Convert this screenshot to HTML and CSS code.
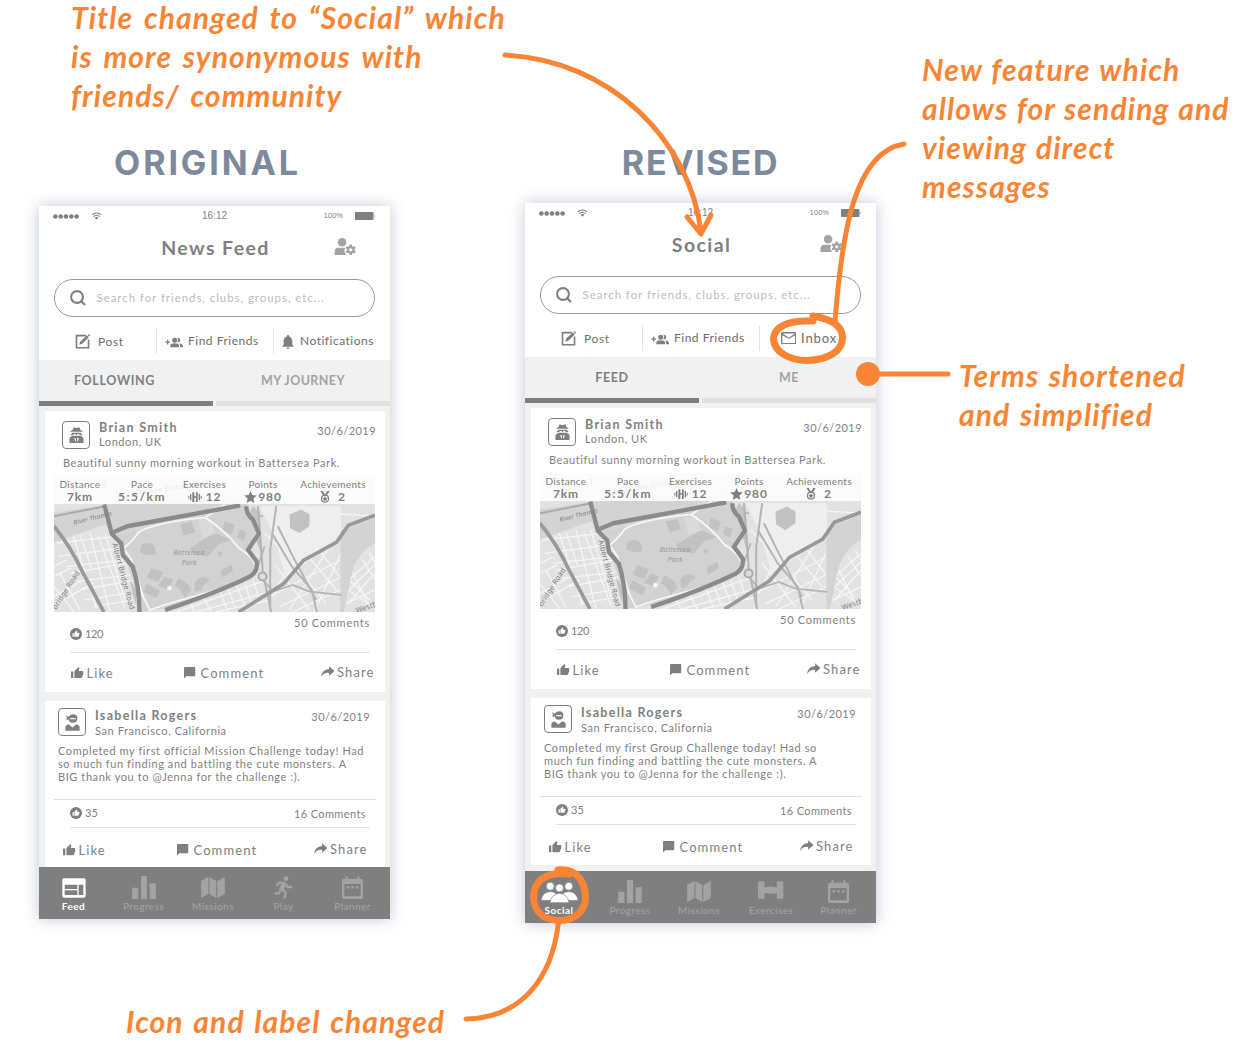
FILE: index.html
```html
<!DOCTYPE html>
<html lang="en">
<head>
<meta charset="utf-8">
<title>News feed: original and revised</title>
<link rel="stylesheet" href="styles.css">
</head>
<body>
<svg class="sprite" aria-hidden="true">
  <symbol id="i-signal" viewBox="0 0 26 5"><circle cx="2.400" cy="2.500" r="2.300"/><circle cx="7.700" cy="2.500" r="2.300"/><circle cx="13" cy="2.500" r="2.300"/><circle cx="18.300" cy="2.500" r="2.300"/><circle cx="23.600" cy="2.500" r="2.300"/></symbol>
  <symbol id="i-wifi" viewBox="0 0 24 18"><g fill="none" stroke="currentColor" stroke-width="2.400"><path d="M1.500 6.500C7.500.8 16.500.8 22.500 6.500"/><path d="M5 10.500c4-3.800 10-3.800 14 0"/></g><path d="M7.800 13c2.600-2 5.800-2 8.400 0L12 17.500z" fill="currentColor"/></symbol>
  <symbol id="i-battery" viewBox="0 0 20 8"><rect width="18.500" height="8" rx="1"/><path d="M19 2.500q1.200 1.500 0 3z"/></symbol>
  <symbol id="i-usercog" viewBox="0 0 66 52"><circle cx="24" cy="13" r="13"/><path d="M1 52V43Q1 30 14 30h20q-4 6-2 13 1 5 5 9z"/><path fill-rule="evenodd" d="M47 20h7l1 5 3 2 5-2 3 6-4 3v4l4 3-3 6-5-2-3 2-1 5h-7l-1-5-3-2-5 2-3-6 4-3v-4l-4-3 3-6 5 2 3-2zM50.500 31a5 5 0 1 0 0 10 5 5 0 1 0 0-10z"/></symbol>
  <symbol id="i-search" viewBox="0 0 16 16"><g fill="none" stroke="currentColor" stroke-width="2.100"><circle cx="7" cy="7" r="5.900"/><path d="M11.200 11.200 15 15"/></g></symbol>
  <symbol id="i-edit" viewBox="0 0 48 46"><path d="M33 5H4v37h37V17" fill="none" stroke="currentColor" stroke-width="5"/><path d="M13 33l2-9L36 4l6 6-20 20zM38 2l3-2 6 5-3 3z"/></symbol>
  <symbol id="i-friends" viewBox="0 0 54 32"><path d="M6 8h4v5h5v4h-5v5H6v-5H1v-4h5z"/><circle cx="29" cy="9" r="7.500"/><path d="M16 30v-5q1-7 13-7t13 7v5z"/><path d="M37 2q8-1 9 7-1 8-9 7 5-7 0-14zM42 18q10 1 12 8v4h-8q0-7-4-12z"/></symbol>
  <symbol id="i-bell" viewBox="4 2.500 16 19.500"><path d="M12 22c1.100 0 2-.9 2-2h-4c0 1.100.89 2 2 2zm6-6v-5c0-3.070-1.640-5.640-4.500-6.320V4c0-.83-.67-1.500-1.500-1.500s-1.500.67-1.500 1.500v.68C7.630 5.360 6 7.920 6 11v5l-2 2v1h16v-1z"/></symbol>
  <symbol id="i-mail" viewBox="2 4 20 16"><path d="M20 4H4c-1.100 0-2 .9-2 2v12c0 1.100.9 2 2 2h16c1.100 0 2-.9 2-2V6c0-1.100-.9-2-2-2zm.2 14.200H3.800V8l8.200 5 8.200-5zM12 11.200 4 6h16z"/></symbol>
  <symbol id="i-spy" viewBox="0 0 46 50"><path d="M10 10 14 1q9 4 18 0l4 9 6 3v2H4v-2zM9 18h28v2l4 3v3H5v-3l4-3zM1 50V37q1-8 9-9h26q8 1 9 9v13z"/><path d="M14 22h7v3h-7zM25 22h7v3h-7zM16 34l5 1v7l-2 5zM30 34l-5 1v7l2 5z" fill="#fff"/></symbol>
  <symbol id="i-girl" viewBox="0 0 46 52"><path d="M2 4l9 4q6-7 14-7 13 0 13 12 0 14-14 14-11 0-13-11l-7 3 2-8zM1 51V42q1-10 11-10l11 9 11-9q11 0 11 10v9z"/><path d="M15 13q9-2 18 0v3H16z" fill="#fff"/></symbol>
  <symbol id="i-dumbbell" viewBox="0 0 42 30"><path d="M1 11h3v9H1zM6 6h4v19H6zM13 1h6v12h5V1h5v29h-5V17h-5v13h-6zM32 6h4v19h-4zM38 11h3v9h-3z"/></symbol>
  <symbol id="i-star" viewBox="0 0 24 23"><path d="M12 0l3.400 7.900 8.600.8-6.500 5.700 1.900 8.500L12 18.500l-7.400 4.400 1.900-8.500L0 8.700l8.600-.8z"/></symbol>
  <symbol id="i-medal" viewBox="0 0 30 36"><path d="M1 0h7l8 12-5 3zM29 0h-7l-8 12 5 3z"/><circle cx="15" cy="23" r="10.500" fill="none" stroke="currentColor" stroke-width="3.500"/><path d="M15 15l2.500 5.500 5.500.5-4 4 1 5.500-5-3-5 3 1-5.500-4-4 5.500-.5z"/></symbol>
  <symbol id="i-thumb" viewBox="1 1 22 20"><path d="M1 21h4V9H1v12zm22-11c0-1.100-.9-2-2-2h-6.310l.95-4.570.03-.32c0-.41-.17-.79-.44-1.060L14.170 1 7.590 7.590C7.220 7.950 7 8.450 7 9v10c0 1.100.9 2 2 2h9c.83 0 1.540-.5 1.840-1.220l3.020-7.050c.09-.23.14-.47.14-.73v-2z"/></symbol>
  <symbol id="i-liked" viewBox="0 0 24 24"><circle cx="12" cy="12" r="12"/><path fill="#fff" d="M5 17.500h2.700v-7H5zm14-6.500q0-1.500-1.600-1.500h-3.700l.8-3.400-1.300-1.300-4.400 4.700v8h6.700q1.200 0 1.600-1z"/></symbol>
  <symbol id="i-chat" viewBox="2 2 20 20"><path d="M20 2H4c-1.100 0-2 .9-2 2v18l4-4h14c1.100 0 2-.9 2-2V4c0-1.100-.9-2-2-2z"/></symbol>
  <symbol id="i-share" viewBox="0 0 40 33"><path d="M24 0l16 14-16 14v-8Q8 18 0 33 2 10 24 8z"/></symbol>
  <symbol id="i-web" viewBox="0 0 72 60"><path fill-rule="evenodd" d="M7 1h58q6 0 6 6v46q0 6-6 6H7q-6 0-6-6V7q0-6 6-6zM8 20v13h38V20zm0 17v14h38V37zm42-17v31h14V20z"/></symbol>
  <symbol id="i-bars" viewBox="0 0 72 70"><path d="M0 36h19v34H0zM27 0h18v70H27zM53 22h19v48H53z"/></symbol>
  <symbol id="i-map" viewBox="0 0 72 64"><path d="M0 12 22 0v52L0 64zM25 0l21 12v52L25 52zM49 12 72 0v52L49 64z"/></symbol>
  <symbol id="i-run" viewBox="0 0 58 70"><circle cx="37" cy="8" r="7"/><g fill="none" stroke="currentColor" stroke-width="7" stroke-linecap="round" stroke-linejoin="round"><path d="M9 27l7-7h13l8 6 5 8h11M4 53h10l7-10"/><path d="M30 24l-7 16" stroke-width="13"/><path d="M24 41l12 10-4 15"/></g></symbol>
  <symbol id="i-calendar" viewBox="0 0 64 70"><path fill-rule="evenodd" d="M11 1h6v7h30V1h6v7h4q7 0 7 7v48q0 7-7 7H7q-7 0-7-7V15q0-7 7-7h4zM7 24v38h50V24z"/><path d="M14 31h8v7h-8zM28 31h8v7h-8zM42 31h8v7h-8z"/></symbol>
  <symbol id="i-weights" viewBox="0 0 80 54"><path d="M4 0h12q4 0 4 4v15q20-5 38 0V4q0-4 4-4h12q4 0 4 4v46q0 4-4 4H62q-4 0-4-4V36q-18 5-38 0v14q0 4-4 4H4q-4 0-4-4V4q0-4 4-4z"/></symbol>
  <symbol id="i-group" viewBox="0 0 112 62"><g stroke="#7f7f7f" stroke-width="2"><circle cx="28" cy="12" r="12"/><circle cx="84" cy="12" r="12"/><path d="M0 55q3-25 28-27 25 2 28 27zM56 55q3-25 28-27 25 2 28 27z"/><circle cx="56" cy="17" r="12"/><path d="M27 62q4-26 29-29 25 3 29 29z"/></g></symbol>

  <symbol id="route-map" viewBox="72 230 965 406" preserveAspectRatio="none">
    <rect x="72" y="230" width="965" height="406" fill="#e2e2e2"/>
    <g fill="none" stroke="#f5f5f5" stroke-width="4">
      <path d="M80 430l180-20M85 470l190-25M110 500l180-20M140 545l160-20M165 600l150-25M130 410l70 215M180 400l60 235M225 400l60 200M90 520l60 110M72 560l60 76M72 500l40-20M100 600l90-50M205 410l80 215M150 405l35 100M120 520l170-30M150 570l160-28M190 620l120-20M72 590l80-45M72 530l50-25"/>
      <path d="M440 636l270-95M500 636l220-60M560 636l160-35M520 590l25 46M570 572l25 64M620 555l25 60M670 540l20 60M740 500l100 130M780 480l110 130M820 450l100 120M720 590l215-110M750 620l190-90M790 636l150-70M705 400l90 90M900 440l-120 190M935 460l-80 175M480 605l15 31M595 565l22 60M645 550l22 60M860 440l70 90M770 510l-40 80"/>
      <path d="M700 330l335 20M740 380l180 20M900 320l30 110M860 320l25 100M1037 470l-100 90M1037 520l-80 90M1000 480l37 60M970 520l50 100M940 560l90 60M950 610l87-40M1037 495l-95 90M1020 460l17 30M960 540l60 60"/>
    </g>
    <path d="M690 320h245v100L830 490 770 540 735 410z" fill="#eee"/>
    <path d="M72 340l160-25 420-20v25L420 365 248 405 225 375 72 428z" fill="#d3d3d3"/>
    <path d="M933 395l104-40v75q-50 25-70 90l-24 116h-10z" fill="#d3d3d3"/>
    <path d="M252 405l390-85 45 80-30 50 25 50-12 30-240 90-100 16-20-90-30-90z" fill="#d2d2d2"/>
    <path d="M670 320l20 20 10 140-20-60-25 25 35-45-35-50z" fill="#c4c4c4"/>
    <g fill="#c2c2c2">
      <path d="M335 435q25-12 40 5l5 22q-30 10-50-5zM365 505l35 12-15 30-35-15zM405 530l25 8-15 30-30-10zM350 550l40 22-10 22-40-18zM480 445l75-45 50 20-40 15-30 35-45-5zM445 535q30 10 40 35l-20 25q-10-30-30-35zM495 545q30-25 45 0-20 5-25 25l-20 5zM575 510l30-15 5 20-35 18zM560 455l20 5-10 12zM450 375l35-8 12 30-35 10zM585 365l30 10-8 28-28-10zM630 390l22 8-10 25-20-10zM780 345l35-15 25 15v35l-30 20-28-15zM300 540l20 30v50l-12-40z"/>
      <path d="M505 362l38-5 15 45-40 12z" fill="#dadada"/>
      <path d="M545 320l60-10 8 22-55 8z" fill="#dadada"/>
    </g>
    <path d="M282 445q30-25 45-48 50-28 200-43 60 40 100 90 55 35 50 65-5 25-70 48L420 610l-60 20-20-40-35-110-20-30M527 354l60-40" fill="none" stroke="#f8f8f8" stroke-width="5"/>
    <g fill="none" stroke="#b4b4b4" stroke-width="6">
      <path d="M685 320l15 200 25 116M740 320l-18 130v180M727 400l60 100 60 70 15 66M745 380l45 90 70 130"/>
      <path d="M700 540l30 35 60-20 50 20 95 10M700 350h-12M705 440l-20 60" stroke-width="5"/>
    </g>
    <g fill="none" stroke="#999" stroke-width="11">
      <path d="M72 380q50 60 85 135l65 121"/>
      <path d="M1037 347l-80 30-35 50-100 55-60 70-135 84"/>
      <path d="M72 350l155-30M225 245v20" stroke-width="6" stroke="#aaa"/>
    </g>
    <g fill="none" stroke="#8b8b8b" stroke-width="13" stroke-linejoin="round">
      <path d="M223 315l23 88 28 28 5 35 30 35q20 60 20 135"/>
      <path d="M250 398l42-18 340-62M650 320q0 25 20 40l18 42-33 48 26 35q5 30-20 45-90 45-255 100"/>
    </g>
    <circle cx="699" cy="530" r="12" fill="#ddd" stroke="#aaa" stroke-width="6"/>
    <circle cx="419" cy="565" r="7" fill="#f5f5f5"/>
    <g class="map-labels">
      <text x="132" y="376" transform="rotate(-14 132 376)" class="water">River Thames</text>
      <text x="431" y="465" class="park">Battersea</text>
      <text x="456" y="497" class="park">Park</text>
      <text x="247" y="432" transform="rotate(75 247 432)">Albert Bridge Road</text>
      <text x="78" y="630" transform="rotate(-57 78 630)">bridge Road</text>
      <text x="982" y="640" transform="rotate(-20 982 640)">Westb</text>
      <text x="315" y="288" transform="rotate(-8 315 288)">Chelsea Embankment</text>
    </g>
  </symbol>
</svg>

<main class="board">
  <section class="version version-original">
    <h2>ORIGINAL</h2>
    <div class="phone">
      <div class="status">
        <svg class="signal"><use href="#i-signal"/></svg>
        <svg class="wifi"><use href="#i-wifi"/></svg>
        <span class="clock">16:12</span>
        <span class="charge">100%</span>
        <svg class="battery"><use href="#i-battery"/></svg>
      </div>
      <div class="title-row"><h1>News Feed</h1><svg class="usercog"><use href="#i-usercog"/></svg></div>
      <div class="search"><svg><use href="#i-search"/></svg><span class="hint">Search for friends, clubs, groups, etc...</span></div>
      <div class="shortcuts">
        <div class="shortcut post"><svg class="edit"><use href="#i-edit"/></svg><span>Post</span></div>
        <div class="shortcut"><svg class="friends"><use href="#i-friends"/></svg><span>Find Friends</span></div>
        <div class="shortcut"><svg class="bell"><use href="#i-bell"/></svg><span>Notifications</span></div>
      </div>
      <div class="tabs"><div class="tab active">FOLLOWING</div><div class="tab">MY JOURNEY</div></div>
      <div class="feed">
        <article class="card card-run">
          <header><span class="avatar"><svg class="spy"><use href="#i-spy"/></svg></span><div class="who"><b>Brian Smith</b><span>London, UK</span></div><time>30/6/2019</time></header>
          <p class="message">Beautiful sunny morning workout in Battersea Park.</p>
          <div class="map"><svg><use href="#route-map"/></svg>
            <dl class="stats">
              <div><dt>Distance</dt><dd>7km</dd></div>
              <div><dt>Pace</dt><dd class="pace">5:5/km</dd></div>
              <div><dt>Exercises</dt><dd><svg class="dumbbell"><use href="#i-dumbbell"/></svg><span>12</span></dd></div>
              <div><dt>Points</dt><dd><svg class="star"><use href="#i-star"/></svg><span>980</span></dd></div>
              <div><dt>Achievements</dt><dd><svg class="medal"><use href="#i-medal"/></svg><span>2</span></dd></div>
            </dl>
          </div>
          <div class="counts"><span class="likes"><svg><use href="#i-liked"/></svg>120</span><span class="comments">50 Comments</span></div>
          <div class="actions"><span class="like"><svg class="thumb"><use href="#i-thumb"/></svg>Like</span><span class="comment"><svg class="chat"><use href="#i-chat"/></svg>Comment</span><span class="share"><svg class="forward"><use href="#i-share"/></svg>Share</span></div>
        </article>
        <article class="card card-challenge">
          <header><span class="avatar"><svg class="girl"><use href="#i-girl"/></svg></span><div class="who"><b>Isabella Rogers</b><span>San Francisco, California</span></div><time>30/6/2019</time></header>
          <p class="message">Completed my first official Mission Challenge today! Had<br>so much fun finding and battling the cute monsters. A<br>BIG thank you to @Jenna for the challenge :).</p>
          <div class="counts"><span class="likes"><svg><use href="#i-liked"/></svg>35</span><span class="comments">16 Comments</span></div>
          <div class="actions"><span class="like"><svg class="thumb"><use href="#i-thumb"/></svg>Like</span><span class="comment"><svg class="chat"><use href="#i-chat"/></svg>Comment</span><span class="share"><svg class="forward"><use href="#i-share"/></svg>Share</span></div>
        </article>
      </div>
      <nav class="tabbar">
        <div class="item current"><svg class="web"><use href="#i-web"/></svg><span>Feed</span></div>
        <div class="item"><svg class="bars"><use href="#i-bars"/></svg><span>Progress</span></div>
        <div class="item"><svg class="fold"><use href="#i-map"/></svg><span>Missions</span></div>
        <div class="item"><svg class="run"><use href="#i-run"/></svg><span>Play</span></div>
        <div class="item"><svg class="calendar"><use href="#i-calendar"/></svg><span>Planner</span></div>
      </nav>
    </div>
  </section>

  <section class="version version-revised">
    <h2>REVISED</h2>
    <div class="phone">
      <div class="status">
        <svg class="signal"><use href="#i-signal"/></svg>
        <svg class="wifi"><use href="#i-wifi"/></svg>
        <span class="clock">16:12</span>
        <span class="charge">100%</span>
        <svg class="battery"><use href="#i-battery"/></svg>
      </div>
      <div class="title-row"><h1>Social</h1><svg class="usercog"><use href="#i-usercog"/></svg></div>
      <div class="search"><svg><use href="#i-search"/></svg><span class="hint">Search for friends, clubs, groups, etc...</span></div>
      <div class="shortcuts">
        <div class="shortcut post"><svg class="edit"><use href="#i-edit"/></svg><span>Post</span></div>
        <div class="shortcut"><svg class="friends"><use href="#i-friends"/></svg><span>Find Friends</span></div>
        <div class="shortcut inbox"><svg class="mail"><use href="#i-mail"/></svg><span>Inbox</span></div>
      </div>
      <div class="tabs"><div class="tab active">FEED</div><div class="tab">ME</div></div>
      <div class="feed">
        <article class="card card-run">
          <header><span class="avatar"><svg class="spy"><use href="#i-spy"/></svg></span><div class="who"><b>Brian Smith</b><span>London, UK</span></div><time>30/6/2019</time></header>
          <p class="message">Beautiful sunny morning workout in Battersea Park.</p>
          <div class="map"><svg><use href="#route-map"/></svg>
            <dl class="stats">
              <div><dt>Distance</dt><dd>7km</dd></div>
              <div><dt>Pace</dt><dd class="pace">5:5/km</dd></div>
              <div><dt>Exercises</dt><dd><svg class="dumbbell"><use href="#i-dumbbell"/></svg><span>12</span></dd></div>
              <div><dt>Points</dt><dd><svg class="star"><use href="#i-star"/></svg><span>980</span></dd></div>
              <div><dt>Achievements</dt><dd><svg class="medal"><use href="#i-medal"/></svg><span>2</span></dd></div>
            </dl>
          </div>
          <div class="counts"><span class="likes"><svg><use href="#i-liked"/></svg>120</span><span class="comments">50 Comments</span></div>
          <div class="actions"><span class="like"><svg class="thumb"><use href="#i-thumb"/></svg>Like</span><span class="comment"><svg class="chat"><use href="#i-chat"/></svg>Comment</span><span class="share"><svg class="forward"><use href="#i-share"/></svg>Share</span></div>
        </article>
        <article class="card card-challenge">
          <header><span class="avatar"><svg class="girl"><use href="#i-girl"/></svg></span><div class="who"><b>Isabella Rogers</b><span>San Francisco, California</span></div><time>30/6/2019</time></header>
          <p class="message">Completed my first Group Challenge today! Had so<br>much fun finding and battling the cute monsters. A<br>BIG thank you to @Jenna for the challenge :).</p>
          <div class="counts"><span class="likes"><svg><use href="#i-liked"/></svg>35</span><span class="comments">16 Comments</span></div>
          <div class="actions"><span class="like"><svg class="thumb"><use href="#i-thumb"/></svg>Like</span><span class="comment"><svg class="chat"><use href="#i-chat"/></svg>Comment</span><span class="share"><svg class="forward"><use href="#i-share"/></svg>Share</span></div>
        </article>
      </div>
      <nav class="tabbar">
        <div class="item current"><svg class="group"><use href="#i-group"/></svg><span>Social</span></div>
        <div class="item"><svg class="bars"><use href="#i-bars"/></svg><span>Progress</span></div>
        <div class="item"><svg class="fold"><use href="#i-map"/></svg><span>Missions</span></div>
        <div class="item"><svg class="weights"><use href="#i-weights"/></svg><span>Exercises</span></div>
        <div class="item"><svg class="calendar"><use href="#i-calendar"/></svg><span>Planner</span></div>
      </nav>
    </div>
  </section>

  <svg class="arrows" viewBox="0 0 1241 1051">
    <path d="M505 55C610 60 690 140 701 232M687 217l14 17 10-19"/>
    <path d="M904 144C855 152 842 230 835 322"/>
    <path d="M868 374h80"/>
    <path d="M466 1019C520 1018 552 980 558.500 922"/>
    <circle cx="868" cy="374" r="12"/>
    <path class="ring" d="M811 321C790 320 774 326 773.500 339C774 352 790 360.500 807 360.500C828 360 843 351 842.500 337C842 326 832 319 813 316v5"/>
    <path class="ring" d="M569 874C547 871 534 880 533.500 897C534 912 544 920 559 920.500C573 921 586 912 585.500 897C585 880 575 868 558 870"/>
  </svg>
  <p class="note note-title">Title changed to “Social” which<br>is more synonymous with<br>friends/ community</p>
  <p class="note note-inbox">New feature which<br>allows for sending and<br>viewing direct<br>messages</p>
  <p class="note note-terms">Terms shortened<br>and simplified</p>
  <p class="note note-icon">Icon and label changed</p>
</main>
</body>
</html>
```
FILE: styles.css
```css
* { box-sizing: border-box; margin: 0; padding: 0; }
body { background: #fff; color: #7f7f7f; font-family: Lato, "Liberation Sans", sans-serif; }
svg { display: block; fill: currentColor; flex: none; }
.sprite { position: absolute; width: 0; height: 0; }
.board { position: relative; display: flex; align-items: flex-start; gap: 135px; width: 1241px; height: 1051px; padding: 142px 0 0 39px; overflow: hidden; }
.version { width: 351px; }
h2 { height: 64px; font: 700 34px/41px Inter, sans-serif; letter-spacing: 1.700px; color: #7f899c; text-align: center; }
.version-original h2 { padding-right: 14px; letter-spacing: 2.900px; }
.version-revised h2 { height: 61px; }

.phone { display: flex; flex-direction: column; height: 713px; background: #fff; box-shadow: 0 0 14px rgba(110, 122, 155, .42); }
.version-revised .phone { height: 720px; }

.status { display: flex; align-items: center; height: 20px; padding: 0 15px 0 13.500px; flex: none; font: 10px/20px "Liberation Sans", sans-serif; }
.signal { width: 26px; height: 5px; }
.wifi { width: 11px; height: 8px; margin-left: 12.500px; }
.clock { margin-left: 100px; }
.charge { margin-left: auto; font-size: 7.500px; }
.battery { width: 20px; height: 8px; margin-left: 12px; }

.title-row { display: grid; grid-template-columns: 1fr auto 1fr; align-items: center; height: 44px; flex: none; padding-left: 2px; }
h1 { grid-column: 2; font-size: 19.500px; line-height: 24px; font-weight: 700; letter-spacing: 1.400px; }
.usercog { width: 22px; height: 17px; justify-self: end; margin: 0 34px 3px 0; color: #a3a3a3; }

.search { display: flex; align-items: center; height: 38px; flex: none; margin: 9px 15px 0 15px; padding-left: 14.500px; border: 1px solid #999; border-radius: 19px; }
.search svg { width: 16px; height: 16px; margin-right: 11px; }
.hint { margin-top: -2px; font-size: 11.500px; color: #bdbdbd; letter-spacing: .94px; }

.shortcuts { display: grid; grid-template-columns: 117px 117px 117px; align-items: center; height: 43px; padding-top: 6px; flex: none; }
.shortcut { display: flex; align-items: center; height: 25px; padding-left: 8px; font-size: 12px; color: #6c6c6c; letter-spacing: .5px; }
.shortcut + .shortcut { border-left: 1px solid #e4e4e4; }
.shortcut + .shortcut span { margin-top: -2px; }
.shortcut svg { color: #7f7f7f; }
.shortcut.post { padding-left: 36px; letter-spacing: .6px; }
.edit { width: 16px; height: 15px; margin-right: 7px; }
.friends { width: 18px; height: 11px; margin: 2px 5px 0 0; }
.bell { width: 12px; height: 14px; margin-right: 6px; }
.shortcut.inbox { padding-left: 20.500px; font-size: 13px; letter-spacing: .9px; }
.mail { width: 15.500px; height: 12.500px; margin: -1px 5px 0 0; }

.tabs { display: grid; grid-template-columns: 174px 174px; gap: 3px; height: 46px; flex: none; background: #f1f1f1; }
.tab { padding-top: 13px; border-bottom: 5px solid #e1e1e1; font-size: 12.500px; line-height: 16px; font-weight: 700; text-align: center; color: #a3a3a3; letter-spacing: .4px; }
.tab.active { border-color: #7f7f7f; color: #7f7f7f; padding-right: 23px; letter-spacing: .65px; }
.version-revised .tab.active { padding-right: 0; }

.feed { flex: 1; min-height: 0; overflow: hidden; display: flex; flex-direction: column; gap: 9px; padding: 5px 5px 0 6px; background: #f1f1f1; }
.card { flex: none; background: #fff; font-size: 11px; letter-spacing: .58px; }
.card header { display: flex; align-items: flex-start; height: 28px; }
.card-run { height: 281px; padding-top: 10px; }
.card-run header { padding: 0 9px 0 17px; }
.card-challenge { height: 167px; padding-top: 7px; }
.card-challenge header { padding: 0 15px 0 13px; }
.avatar { display: grid; place-items: center; width: 28px; height: 28px; border: 1px solid #7f7f7f; border-radius: 4px; }
.spy { width: 15px; height: 16px; }
.girl { width: 15px; height: 17px; }
.who { margin: 0 auto 0 9px; line-height: 14px; }
.who b, .who span { display: block; }
.who b { font-size: 12.500px; letter-spacing: 1.300px; }
time { margin-top: 2.500px; line-height: 14px; letter-spacing: .45px; }
.card-run .message { margin: 7px 0 6px 18px; line-height: 14px; white-space: nowrap; }
.map { position: relative; width: 321px; height: 136px; margin-left: 9px; }
.map > svg { width: 321px; height: 136px; }
.map-labels { font-family: "Noto Sans", sans-serif; font-size: 22px; fill: #808080; }
.water { font-size: 19px; font-style: italic; }
.park { font-style: italic; font-size: 21px; fill: #999; }
.stats { position: absolute; inset: 0 0 auto 0; height: 28px; display: grid; grid-template-columns: 52px 72px 53px 64px 76px; background: rgba(255, 255, 255, .85); text-align: center; }
.stats dt { font-size: 10px; line-height: 12px; padding-top: 2px; letter-spacing: .32px; white-space: nowrap; }
.stats dd { display: flex; align-items: center; justify-content: center; font-size: 12px; font-weight: 700; line-height: 14px; letter-spacing: .8px; }
.stats .pace { letter-spacing: 1.500px; }
.dumbbell { width: 14px; height: 10px; margin-right: 4px; }
.star { width: 13px; height: 12px; margin-right: 1px; }
.medal { width: 10px; height: 12px; margin-right: 8px; }

.counts { display: flex; justify-content: space-between; }
.likes { display: flex; align-items: center; height: 14px; line-height: 14px; letter-spacing: 0; }
.likes svg { width: 12px; height: 12px; margin-right: 3px; }
.card-run .likes { margin-top: 15px; letter-spacing: -.4px; }
.card-run .counts { height: 41px; margin: 0 15px 0 25px; border-bottom: 1px solid #e3e3e3; }
.card-run .comments { margin-top: 4px; line-height: 14px; letter-spacing: .75px; }
.actions { display: grid; align-items: center; font-size: 13px; letter-spacing: 1.100px; }
.actions > span { display: flex; align-items: center; }
.card-run .actions { grid-template-columns: 139px 137px 64px; height: 39px; }
.card-run .like { padding-left: 26px; }
.thumb { width: 12.500px; height: 11.500px; margin-right: 3px; }
.chat { width: 11.500px; height: 11.500px; margin-right: 5px; }
.forward { width: 13.500px; height: 11.500px; margin-right: 2.500px; }
.share { margin-top: -2px; }

.card-challenge .who { margin: 1px auto 0 9px; line-height: 14.500px; }
.card-challenge time { margin-top: 2px; }
.card-challenge .message { margin: 8px 0 0 13px; line-height: 13px; white-space: nowrap; }
.card-challenge .counts { position: relative; margin: 16px 9px 0 9px; padding: 6px 10px 0 16px; height: 29px; border-top: 1px solid #e0e0e0; }
.card-challenge .counts::after { content: ""; position: absolute; left: 16px; right: 6px; bottom: 0; height: 1px; background: #e3e3e3; }
.card-challenge .comments { line-height: 16px; letter-spacing: .4px; }
.card-challenge .actions { grid-template-columns: 132px 137px 71px; height: 42px; padding-top: 2px; }
.card-challenge .like { padding-left: 18px; }

.tabbar { flex: none; display: grid; grid-template-columns: 69px 71px 68px 73px 65px; height: 52px; background: #7f7f7f; color: #a3a3a3; font-size: 10px; letter-spacing: .45px; }
.version-revised .tabbar { grid-template-columns: 68px 74px 64px 80px 55px; }
.item { display: grid; grid-template-rows: 24px 13.500px; justify-items: center; align-items: end; padding-top: 8px; line-height: 13px; }
.item.current { color: #fff; font-weight: 700; }
.web { width: 24px; height: 20px; margin-bottom: 1px; }
.bars { width: 24px; height: 23px; }
.fold { width: 24px; height: 21px; margin-bottom: 1px; }
.run { width: 19px; height: 23px; }
.calendar { width: 21px; height: 23px; }
.weights { width: 26px; height: 18px; margin-bottom: 4px; }
.group { width: 37px; height: 21px; }

.arrows { position: absolute; inset: 0; width: 1241px; height: 1051px; color: #f98534; }
.arrows path { fill: none; stroke: currentColor; stroke-width: 5; stroke-linecap: round; stroke-linejoin: round; }
.arrows .ring { stroke-width: 7; }
.note { position: absolute; font-size: 30px; line-height: 39px; font-weight: 700; font-style: italic; color: #f98534; white-space: nowrap; letter-spacing: 1.100px; word-spacing: 3px; }
.note-title { left: 71px; top: -2px; }
.note-inbox { left: 922px; top: 50px; word-spacing: 1px; }
.note-terms { left: 959px; top: 356px; word-spacing: 2px; }
.note-icon { left: 126px; top: 1002px; word-spacing: 2px; }
```
